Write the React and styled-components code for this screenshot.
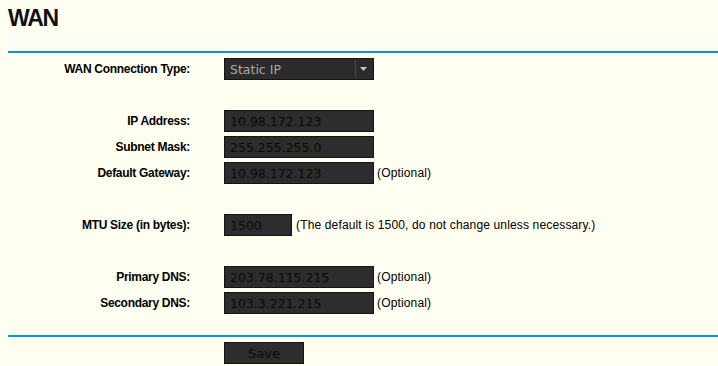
import React from "react";
import styled, { createGlobalStyle } from "styled-components";

const GlobalStyle = createGlobalStyle`
  html, body { margin: 0; padding: 0; background: #fefef1; }
  body { font-family: "Liberation Sans", Arial, sans-serif; }
`;

const Page = styled.div`
  padding-left: 8px;
  width: 710px;
`;

const Title = styled.h1`
  margin: 0;
  height: 33px;
  padding-top: 6px;
  box-sizing: border-box;
  font: bold 23px/25px "Liberation Sans", Arial, sans-serif;
  letter-spacing: -1.3px;
  color: #111;
`;

const Band = styled.div`
  height: 18px;
  background: #fcfdf6;
`;

const Rule = styled.div`
  height: 2px;
  background: #0399cb;
`;

const Form = styled.div`
  display: grid;
  grid-template-columns: 182px 1fr;
  column-gap: 34px;
  grid-auto-rows: 26px;
  margin-top: 3px;
  margin-bottom: 19px;
`;

const Label = styled.div`
  display: flex;
  align-items: center;
  justify-content: flex-end;
  font: bold 12px "Liberation Sans", Arial, sans-serif;
  letter-spacing: -0.3px;
  color: #000;
`;

const Field = styled.div`
  display: flex;
  align-items: center;
  gap: ${(p) => (p.$tight ? 3 : 4)}px;
`;

const Blank = styled.div`
  grid-column: 1 / span 2;
`;

const TextInput = styled.input`
  box-sizing: border-box;
  width: ${(p) => p.$w}px;
  height: 22px;
  margin: 0;
  padding: 0 0 0 5px;
  background: #2d2d2d;
  border: 1px solid #141414;
  color: #0a0a0a;
  font: 12.5px "DejaVu Sans", sans-serif;
  outline: none;
`;

const Note = styled.span`
  font: 12px "Liberation Sans", Arial, sans-serif;
  letter-spacing: 0.15px;
  color: #000;
`;

const SelectWrap = styled.div`
  position: relative;
  width: 150px;
  height: 22px;
`;

const Select = styled.select`
  appearance: none;
  -webkit-appearance: none;
  box-sizing: border-box;
  width: 150px;
  height: 22px;
  margin: 0;
  padding: 0 0 0 5px;
  background: #2b2b2b;
  border: 1px solid #141414;
  border-radius: 0;
  color: #a9a9a9;
  font: 12.5px "DejaVu Sans", sans-serif;
  outline: none;
`;

const Arrow = styled.div`
  position: absolute;
  top: 2px;
  right: 4px;
  width: 14px;
  height: 18px;
  border-left: 1px solid #4a4a4a;
  display: flex;
  align-items: center;
  justify-content: center;
  pointer-events: none;
`;

const Footer = styled.div`
  padding: 5px 0 0 216px;
`;

const Button = styled.button`
  box-sizing: border-box;
  width: 80px;
  height: 22px;
  margin: 0;
  padding: 0;
  background: #2d2d2d;
  border: 1px solid #141414;
  color: #0a0a0a;
  font: 13px "DejaVu Sans", sans-serif;
`;

const rowsTop = [
  { label: "IP Address:", value: "10.98.172.123" },
  { label: "Subnet Mask:", value: "255.255.255.0" },
  { label: "Default Gateway:", value: "10.98.172.123", note: "(Optional)" },
];

const rowsDns = [
  { label: "Primary DNS:", value: "203.78.115.215", note: "(Optional)" },
  { label: "Secondary DNS:", value: "103.3.221.215", note: "(Optional)" },
];

const InputRow = ({ label, value, note, w = 150 }) => (
  <>
    <Label>{label}</Label>
    <Field $tight={w === 150}>
      <TextInput $w={w} defaultValue={value} readOnly />
      {note && <Note>{note}</Note>}
    </Field>
  </>
);

export default function App() {
  return (
    <>
      <GlobalStyle />
      <Page>
        <Title>WAN</Title>
        <Band />
        <Rule />
        <Form>
          <Label>WAN Connection Type:</Label>
          <Field>
            <SelectWrap>
              <Select defaultValue="static">
                <option value="static">Static IP</option>
                <option value="dynamic">Dynamic IP</option>
                <option value="pppoe">PPPoE</option>
              </Select>
              <Arrow>
                <svg width="7" height="4" viewBox="0 0 7 4">
                  <path d="M0 0 H7 L3.5 4 Z" fill="#c8c8c8" />
                </svg>
              </Arrow>
            </SelectWrap>
          </Field>
          <Blank />
          {rowsTop.map((r) => (
            <InputRow key={r.label} {...r} />
          ))}
          <Blank />
          <InputRow
            label="MTU Size (in bytes):"
            value="1500"
            w={68}
            note="(The default is 1500, do not change unless necessary.)"
          />
          <Blank />
          {rowsDns.map((r) => (
            <InputRow key={r.label} {...r} />
          ))}
        </Form>
        <Rule />
        <Footer>
          <Button>Save</Button>
        </Footer>
      </Page>
    </>
  );
}
